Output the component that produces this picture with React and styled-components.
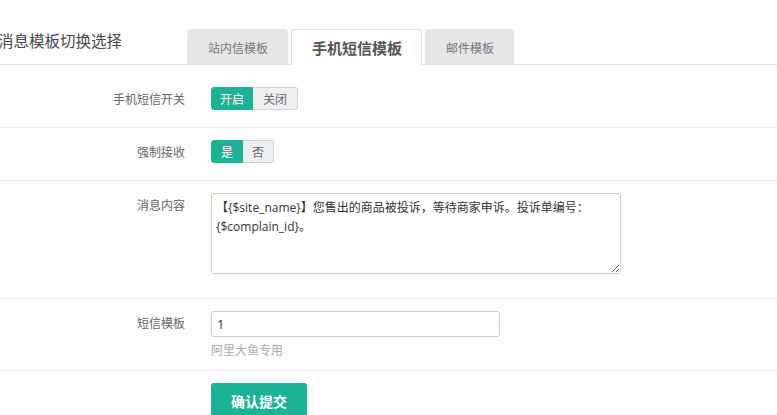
import React from "react";
import styled, { createGlobalStyle } from "styled-components";

const Global = createGlobalStyle`
  html, body { margin: 0; padding: 0; background: #fdfdfd; }
  body { font-family: "Open Sans", "Noto Sans CJK SC", sans-serif; color: #333; overflow: hidden; }
  * { box-sizing: border-box; }
`;

const Page = styled.div`
  width: 777px;
  height: 415px;
  overflow: hidden;
`;

const Header = styled.div`
  display: flex;
  align-items: flex-end;
  height: 65px;
  border-bottom: 1px solid #e1e1e1;
`;

const Title = styled.div`
  width: 189px;
  margin-left: -2px;
  align-self: flex-start;
  padding-top: 29px;
  font-size: 15.5px;
  line-height: 22px;
  color: #4a4a4a;
  font-family: "Noto Sans CJK SC", sans-serif;
`;

const Tabs = styled.div`
  display: flex;
  gap: 3px;
  margin-bottom: -1px;
`;

const Tab = styled.div`
  height: 36px;
  padding: 0 19px 0 20px;
  display: flex;
  align-items: center;
  border-radius: 4px 4px 0 0;
  font-family: "Noto Sans CJK SC", sans-serif;
  font-size: ${(p) => (p.$active ? "15px" : "12px")};
  font-weight: ${(p) => (p.$active ? 700 : 400)};
  color: ${(p) => (p.$active ? "#555" : "#777")};
  background: ${(p) => (p.$active ? "#fdfdfd" : "#e6e6e8")};
  border: 1px solid ${(p) => (p.$active ? "#e1e1e1" : "#e6e6e8")};
  border-bottom-color: ${(p) => (p.$active ? "#fdfdfd" : "#e1e1e1")};
`;

const Form = styled.div`
  padding-top: 10px;
`;

const Row = styled.div`
  display: flex;
  align-items: flex-start;
  padding: 12px 0 ${(p) => p.$pb || 17}px;
  border-bottom: ${(p) => (p.$last ? "none" : "1px solid #ececec")};
`;

const Label = styled.div`
  width: 185px;
  margin-right: 26px;
  text-align: right;
  font-family: "Noto Sans CJK SC", sans-serif;
  font-size: 12px;
  color: #666;
  line-height: 23px;
`;

const Field = styled.div`
  display: flex;
  flex-direction: column;
`;

const Toggle = styled.div`
  display: flex;
  height: 23px;
`;

const ToggleBtn = styled.div`
  height: 23px;
  padding: 0 ${(p) => p.$px}px;
  display: flex;
  align-items: center;
  font-family: "Noto Sans CJK SC", sans-serif;
  font-size: 12px;
  color: ${(p) => (p.$on ? "#fff" : "#666")};
  background: ${(p) => (p.$on ? "#1ab394" : "#eef0f2")};
  border: 1px solid ${(p) => (p.$on ? "#1ab394" : "#cfd2d5")};
  border-radius: ${(p) => (p.$first ? "3px 0 0 3px" : "0 3px 3px 0")};
  ${(p) => (p.$first ? "" : "border-left: none;")}
`;

const TextArea = styled.textarea`
  display: block;
  width: 410px;
  height: 81px;
  margin-bottom: 7px;
  padding: 4px 8px 4px 4px;
  border: 1px solid #cccccc;
  border-radius: 3px;
  background: #fff;
  font-family: "Open Sans", "Noto Sans CJK SC", sans-serif;
  font-size: 12px;
  line-height: 19px;
  color: #333;
  resize: vertical;
  outline: none;
`;

const Input = styled.input`
  display: block;
  width: 289px;
  height: 26px;
  padding: 0 5px;
  border: 1px solid #cccccc;
  border-radius: 3px;
  background: #fff;
  font-family: "Open Sans", sans-serif;
  font-size: 13px;
  color: #333;
  outline: none;
`;

const Help = styled.div`
  margin-top: 4px;
  font-family: "Noto Sans CJK SC", sans-serif;
  font-size: 12px;
  line-height: 18px;
  color: #aaa;
`;

const Submit = styled.button`
  width: 96px;
  height: 36px;
  border: none;
  border-radius: 3px;
  background: #1ab394;
  color: #fff;
  font-family: "Noto Sans CJK SC", sans-serif;
  font-size: 14px;
  font-weight: 700;
  cursor: pointer;
`;

export default function App() {
  return (
    <Page>
      <Global />
      <Header>
        <Title>消息模板切换选择</Title>
        <Tabs>
          <Tab>站内信模板</Tab>
          <Tab $active>手机短信模板</Tab>
          <Tab>邮件模板</Tab>
        </Tabs>
      </Header>
      <Form>
        <Row>
          <Label>手机短信开关</Label>
          <Toggle>
            <ToggleBtn $on $first $px={8}>开启</ToggleBtn>
            <ToggleBtn $px={10}>关闭</ToggleBtn>
          </Toggle>
        </Row>
        <Row>
          <Label>强制接收</Label>
          <Toggle>
            <ToggleBtn $on $first $px={9}>是</ToggleBtn>
            <ToggleBtn $px={9}>否</ToggleBtn>
          </Toggle>
        </Row>
        <Row $pb={17}>
          <Label>消息内容</Label>
          <TextArea
            defaultValue={"【{$site_name}】您售出的商品被投诉，等待商家申诉。投诉单编号：{$complain_id}。"}
          />
        </Row>
        <Row $pb={11}>
          <Label>短信模板</Label>
          <Field>
            <Input defaultValue="1" />
            <Help>阿里大鱼专用</Help>
          </Field>
        </Row>
        <Row $last>
          <Label />
          <Submit>确认提交</Submit>
        </Row>
      </Form>
    </Page>
  );
}
